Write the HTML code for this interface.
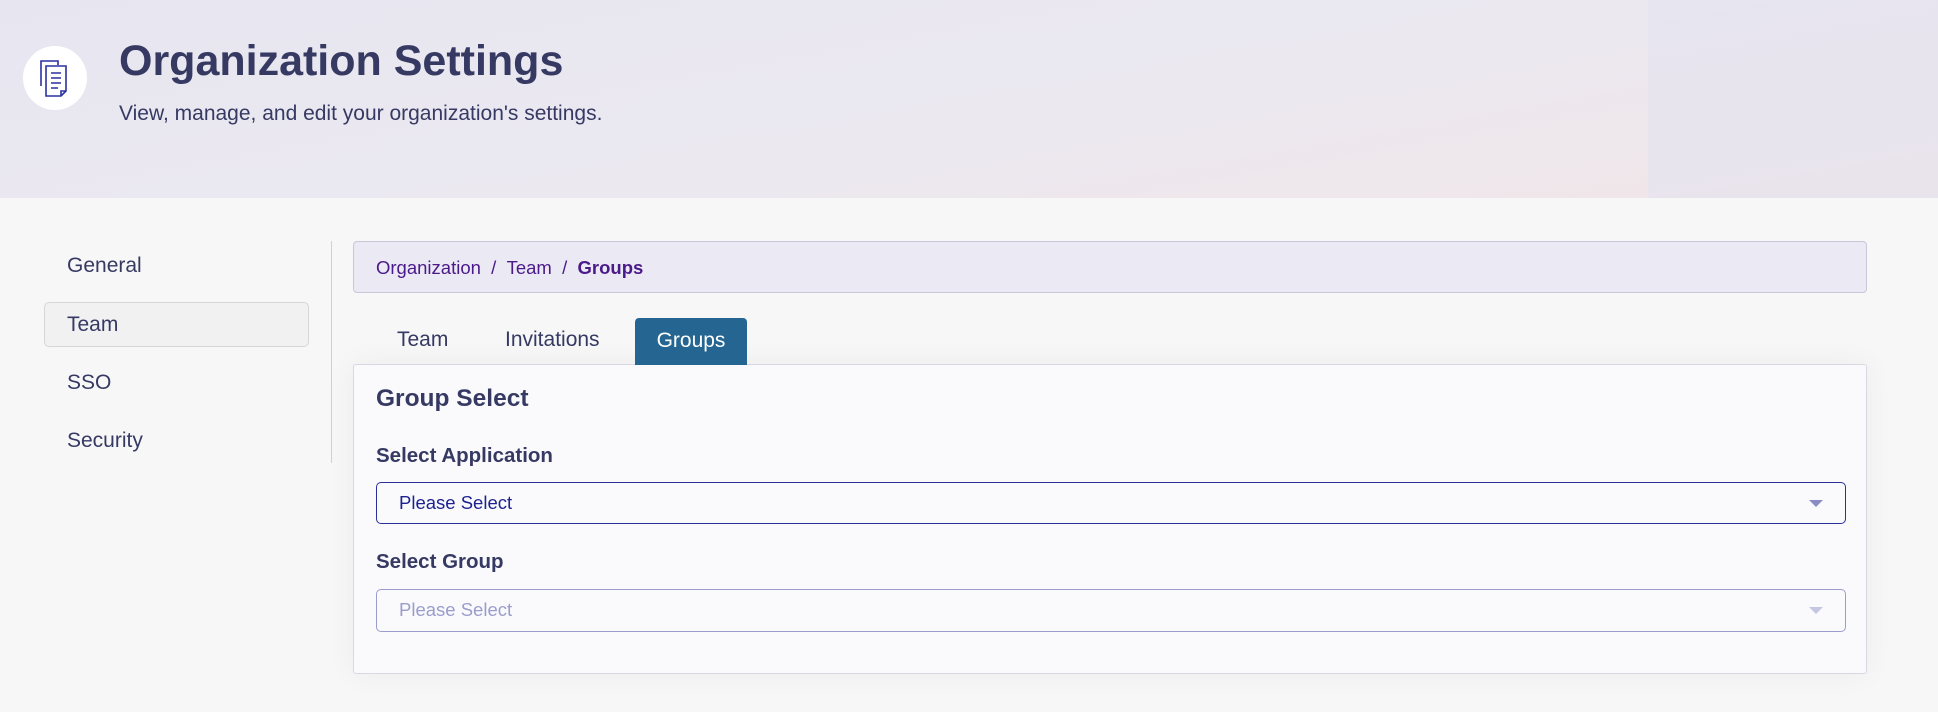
<!DOCTYPE html>
<html><head><meta charset="utf-8"><style>
*{box-sizing:border-box;margin:0;padding:0}
body{width:1938px;height:712px;overflow:hidden;background:#f7f7f7;font-family:"Liberation Sans",Arial,sans-serif;color:#363a63;position:relative}
.hdr{position:absolute;left:0;top:0;width:1938px;height:198px;background:linear-gradient(170deg,#e7e6f0 0%,#ebe8f0 55%,#f1e6e8 100%)}
.hdr .rb{position:absolute;right:0;top:0;width:290px;height:198px;background:rgba(225,226,240,.5)}
.circ{position:absolute;left:23px;top:46px;width:64px;height:64px;border-radius:50%;background:#fff}
.abs{position:absolute;white-space:nowrap}
.side{font-size:21px;color:#363a63}
.teambox{position:absolute;left:44px;top:302px;width:265px;height:45px;border:1px solid #d6d6da;border-radius:5px;background:#f1f1f2}
.bc{position:absolute;left:353px;top:241px;width:1514px;height:52px;background:#eae9f4;border:1px solid #c9c8da;border-radius:4px}
.card{position:absolute;left:353px;top:364px;width:1514px;height:310px;background:#fafafc;border:1px solid #d8d8e2;border-radius:3px;box-shadow:0 0 30px rgba(0,0,0,.05)}
.tab{position:absolute;left:635px;top:318px;width:112px;height:47px;background:#246591;border-radius:4px 4px 0 0;color:#fff;font-size:21px;text-align:center;line-height:46px}
.sel{position:absolute;left:376px;width:1470px;height:42px;border:1px solid #2a2f9a;border-radius:5px;font-size:18.5px;color:#1d2290;padding-left:22px;line-height:40px}
.sel .ar{position:absolute;right:22px;top:17px;width:0;height:0;border-left:7px solid transparent;border-right:7px solid transparent;border-top:7px solid #8a8dc4}
</style></head><body>
<div class="hdr"><div class="rb"></div></div>
<div class="circ"><svg width="64" height="64" viewBox="0 0 64 64" style="position:absolute;left:0;top:0">
<g fill="none" stroke="#2c30a0" stroke-width="1.6">
<path d="M18 40V15h17v4"/><path d="M23 20h20v25l-5 5H23z" fill="#fff"/><path d="M43 45h-5v5"/>
<path d="M28 27h10M28 32h10M28 37h10M28 42h7"/></g></svg></div>
<div class="abs" style="left:119px;top:37px;font-size:43px;font-weight:bold;color:#363a63">Organization Settings</div>
<div class="abs" style="left:119px;top:102px;font-size:21px;color:#363a63">View, manage, and edit your organization's settings.</div>

<div class="teambox"></div>
<div class="abs side" style="left:67px;top:254px">General</div>
<div class="abs side" style="left:67px;top:313px">Team</div>
<div class="abs side" style="left:67px;top:371px">SSO</div>
<div class="abs side" style="left:67px;top:429px">Security</div>
<div style="position:absolute;left:331px;top:241px;width:1px;height:222px;background:#d0d0d4"></div>

<div class="bc"></div>
<div class="abs" style="left:376px;top:257px;font-size:18.5px;color:#4b1a8a">Organization&nbsp;&nbsp;/&nbsp;&nbsp;Team&nbsp;&nbsp;/&nbsp;&nbsp;<b>Groups</b></div>

<div class="abs" style="left:397px;top:328px;font-size:21px">Team</div>
<div class="abs" style="left:505px;top:328px;font-size:21px">Invitations</div>
<div class="card"></div>
<div class="tab">Groups</div>

<div class="abs" style="left:376px;top:385px;font-size:24.5px;font-weight:bold">Group Select</div>
<div class="abs" style="left:376px;top:444px;font-size:20.5px;font-weight:bold">Select Application</div>
<div class="sel" style="top:482px">Please Select<div class="ar"></div></div>
<div class="abs" style="left:376px;top:550px;font-size:20.5px;font-weight:bold">Select Group</div>
<div class="sel" style="top:589px;border-color:#9a9dcc;color:#9a9dcc;height:43px">Please Select<div class="ar" style="border-top-color:#c4c6e2"></div></div>
</body></html>
